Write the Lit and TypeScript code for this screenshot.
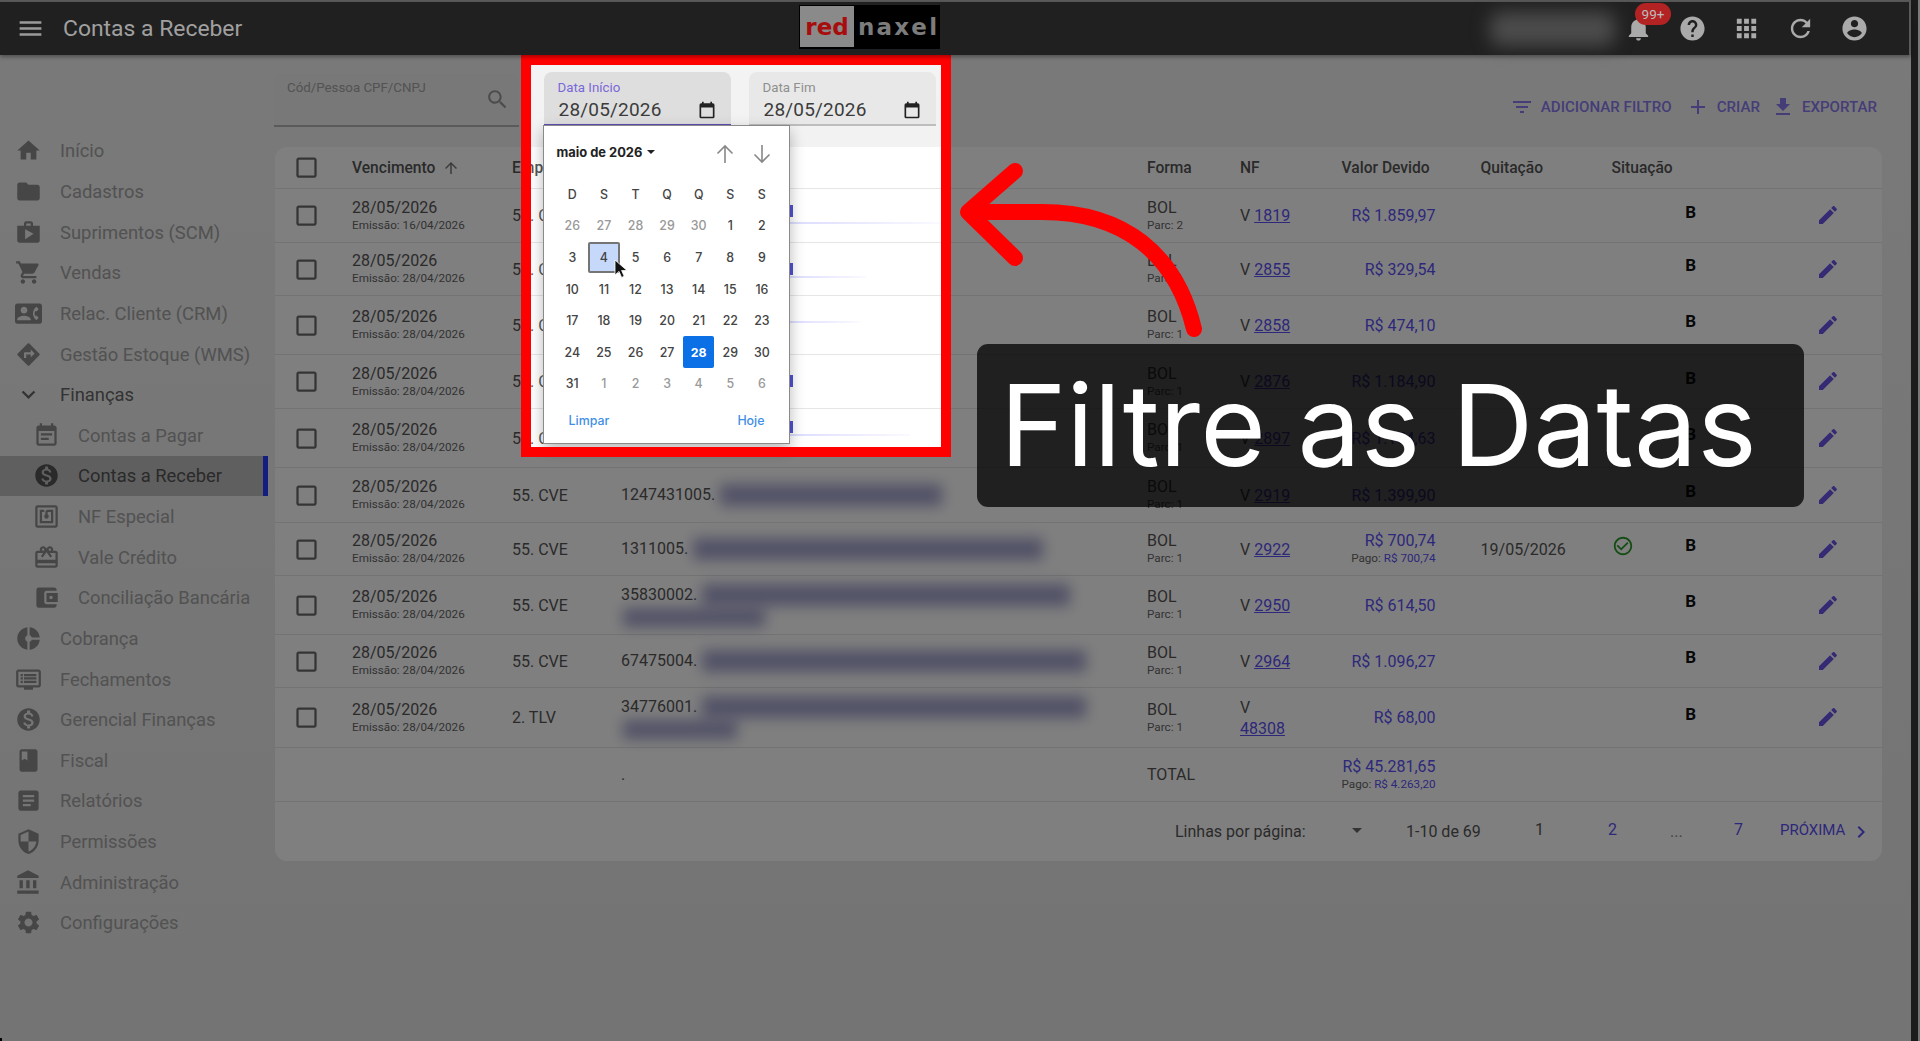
import { LitElement, html, css } from "lit";
import { customElement } from "lit/decorators.js";

const P: Record<string, string> = {
  menu: "M3 18h18v-2H3v2zm0-5h18v-2H3v2zm0-7v2h18V6H3z",
  bell: "M12 22c1.1 0 2-.9 2-2h-4c0 1.1.89 2 2 2zm6-6v-5c0-3.07-1.64-5.64-4.5-6.32V4c0-.83-.67-1.5-1.5-1.5s-1.5.67-1.5 1.5v.68C7.63 5.36 6 7.92 6 11v5l-2 2v1h16v-1l-2-2z",
  help: "M12 2C6.48 2 2 6.48 2 12s4.48 10 10 10 10-4.48 10-10S17.52 2 12 2zm1 17h-2v-2h2v2zm2.07-7.75l-.9.92C13.45 12.9 13 13.5 13 15h-2v-.5c0-1.1.45-2.1 1.17-2.83l1.24-1.26c.37-.36.59-.86.59-1.41 0-1.1-.9-2-2-2s-2 .9-2 2H8c0-2.21 1.79-4 4-4s4 1.79 4 4c0 .88-.36 1.68-.93 2.25z",
  apps: "M4 8h4V4H4v4zm6 12h4v-4h-4v4zm-6 0h4v-4H4v4zm0-6h4v-4H4v4zm6 0h4v-4h-4v4zm6-10v4h4V4h-4zm-6 4h4V4h-4v4zm6 6h4v-4h-4v4zm0 6h4v-4h-4v4z",
  refresh: "M17.65 6.35C16.2 4.9 14.21 4 12 4c-4.42 0-7.99 3.58-7.99 8s3.57 8 7.99 8c3.73 0 6.84-2.55 7.73-6h-2.08c-.82 2.33-3.04 4-5.65 4-3.31 0-6-2.69-6-6s2.69-6 6-6c1.66 0 3.14.69 4.22 1.78L13 11h7V4l-2.35 2.35z",
  user: "M12 2C6.48 2 2 6.48 2 12s4.48 10 10 10 10-4.48 10-10S17.52 2 12 2zm0 3c1.66 0 3 1.34 3 3s-1.34 3-3 3-3-1.34-3-3 1.34-3 3-3zm0 14.2c-2.5 0-4.71-1.28-6-3.22.03-1.99 4-3.08 6-3.08 1.99 0 5.97 1.09 6 3.08-1.29 1.94-3.5 3.22-6 3.22z",
  search: "M15.5 14h-.79l-.28-.27C15.41 12.59 16 11.11 16 9.5 16 5.91 13.09 3 9.5 3S3 5.91 3 9.5 5.91 16 9.5 16c1.61 0 3.09-.59 4.23-1.57l.27.28v.79l5 4.99L20.49 19l-4.99-5zm-6 0C7.01 14 5 11.99 5 9.5S7.01 5 9.5 5 14 7.01 14 9.5 11.99 14 9.5 14z",
  filter: "M10 18h4v-2h-4v2zM3 6v2h18V6H3zm3 7h12v-2H6v2z",
  add: "M19 13h-6v6h-2v-6H5v-2h6V5h2v6h6v2z",
  download: "M19 9h-4V3H9v6H5l7 7 7-7zM5 18v2h14v-2H5z",
  edit: "M3 17.25V21h3.75L17.81 9.94l-3.75-3.75L3 17.25zM20.71 7.04c.39-.39.39-1.02 0-1.41l-2.34-2.34c-.39-.39-1.02-.39-1.41 0l-1.83 1.83 3.75 3.75 1.83-1.83z",
  up: "M4 12l1.41 1.41L11 7.83V20h2V7.83l5.58 5.59L20 12l-8-8-8 8z",
  check: "M16.59 7.58L10 14.17l-3.59-3.58L5 12l5 5 8-8zM12 2C6.48 2 2 6.48 2 12s4.48 10 10 10 10-4.48 10-10S17.52 2 12 2zm0 18c-4.42 0-8-3.58-8-8s3.58-8 8-8 8 3.58 8 8-3.58 8-8 8z",
  chev: "M10 6L8.59 7.41 13.17 12l-4.58 4.59L10 18l6-6z",
  box: "M19 5v14H5V5h14m0-2H5c-1.1 0-2 .9-2 2v14c0 1.1.9 2 2 2h14c1.1 0 2-.9 2-2V5c0-1.1-.9-2-2-2z",
  cal: "M19 4h-1V2h-2v2H8V2H6v2H5a2 2 0 0 0-2 2v14a2 2 0 0 0 2 2h14a2 2 0 0 0 2-2V6a2 2 0 0 0-2-2zm0 16H5V9h14v11z",
  home: "M10 20v-6h4v6h5v-8h3L12 3 2 12h3v8z",
  folder: "M10 4H4c-1.1 0-1.99.9-1.99 2L2 18c0 1.1.9 2 2 2h16c1.1 0 2-.9 2-2V8c0-1.1-.9-2-2-2h-8l-2-2z",
  shop: "M16 6V4c0-1.11-.89-2-2-2h-4c-1.11 0-2 .89-2 2v2H2v13c0 1.11.89 2 2 2h16c1.11 0 2-.89 2-2V6h-6zm-6-2h4v2h-4V4zM9 18V9l7.5 4L9 18z",
  cart: "M7 18c-1.1 0-1.99.9-1.99 2S5.9 22 7 22s2-.9 2-2-.9-2-2-2zM1 2v2h2l3.6 7.59-1.35 2.45c-.16.28-.25.61-.25.96 0 1.1.9 2 2 2h12v-2H7.42c-.14 0-.25-.11-.25-.25l.03-.12.9-1.63h7.45c.75 0 1.41-.41 1.75-1.03l3.58-6.49c.08-.14.12-.31.12-.48 0-.55-.45-1-1-1H5.21l-.94-2H1zm16 16c-1.1 0-1.99.9-1.99 2s.89 2 1.99 2 2-.9 2-2-.9-2-2-2z",
  crm: "M22 3H2C.9 3 0 3.9 0 5v14c0 1.1.9 2 2 2h20c1.1 0 1.99-.9 1.99-2L24 5c0-1.1-.9-2-2-2zM8 6c1.66 0 3 1.34 3 3s-1.34 3-3 3-3-1.34-3-3 1.34-3 3-3zm6 12H2v-1c0-2 4-3.1 6-3.1s6 1.1 6 3.1v1zm3.85-4h1.64L21 16l-1.99 1.99c-1.31-.98-2.28-2.38-2.73-3.99-.18-.64-.28-1.31-.28-2s.1-1.36.28-2c.45-1.62 1.42-3.01 2.73-3.99L21 8l-1.51 2h-1.64c-.22.63-.35 1.3-.35 2s.13 1.37.35 2z",
  wms: "M21.71 11.29l-9-9c-.39-.39-1.02-.39-1.41 0l-9 9c-.39.39-.39 1.02 0 1.41l9 9c.39.39 1.02.39 1.41 0l9-9c.39-.38.39-1.01 0-1.41zM14 14.5V12h-4v3H8v-4c0-.55.45-1 1-1h5V7.5l3.5 3.5-3.5 3.5z",
  more: "M16.59 8.59L12 13.17 7.41 8.59 6 10l6 6 6-6z",
  note: "M17 10H7v2h10v-2zm2-7h-1V1h-2v2H8V1H6v2H5c-1.11 0-1.99.9-1.99 2L3 19c0 1.1.89 2 2 2h14c1.1 0 2-.9 2-2V5c0-1.1-.9-2-2-2zm0 16H5V8h14v11zm-5-5H7v2h7v-2z",
  money: "M12 2C6.48 2 2 6.48 2 12s4.48 10 10 10 10-4.48 10-10S17.52 2 12 2zm1.41 16.09V20h-2.67v-1.93c-1.71-.36-3.16-1.46-3.27-3.4h1.96c.1 1.05.82 1.87 2.65 1.87 1.96 0 2.4-.98 2.4-1.59 0-.83-.44-1.61-2.67-2.14-2.48-.6-4.18-1.62-4.18-3.67 0-1.72 1.39-2.84 3.11-3.21V4h2.67v1.95c1.86.45 2.79 1.86 2.85 3.39H14.3c-.05-1.11-.64-1.87-2.22-1.87-1.5 0-2.4.68-2.4 1.64 0 .84.65 1.39 2.67 1.91s4.18 1.39 4.18 3.91c-.01 1.83-1.38 2.83-3.12 3.16z",
  nf: "M20 2H4c-1.1 0-2 .9-2 2v16c0 1.1.9 2 2 2h16c1.1 0 2-.9 2-2V4c0-1.1-.9-2-2-2zm0 18H4V4h16v16zM18 6h-5c-1.1 0-2 .9-2 2v2.28c-.6.35-1 .98-1 1.72 0 1.1.9 2 2 2s2-.9 2-2c0-.74-.4-1.38-1-1.72V8h3v8H8V8h2V6H6v12h12V6z",
  gift: "M20 6h-2.18c.11-.31.18-.65.18-1 0-1.66-1.34-3-3-3-1.05 0-1.96.54-2.5 1.35l-.5.67-.5-.68C10.96 2.54 10.05 2 9 2 7.34 2 6 3.34 6 5c0 .35.07.69.18 1H4c-1.11 0-1.99.89-1.99 2L2 19c0 1.11.89 2 2 2h16c1.11 0 2-.89 2-2V8c0-1.11-.89-2-2-2zm-5-2c.55 0 1 .45 1 1s-.45 1-1 1-1-.45-1-1 .45-1 1-1zM9 4c.55 0 1 .45 1 1s-.45 1-1 1-1-.45-1-1 .45-1 1-1zm11 15H4v-2h16v2zm0-5H4V8h5.08L7 10.83 8.62 12 11 8.76l1-1.36 1 1.36L15.38 12 17 10.83 14.92 8H20v6z",
  wallet: "M21 18v1c0 1.1-.9 2-2 2H5c-1.11 0-2-.9-2-2V5c0-1.1.89-2 2-2h14c1.1 0 2 .9 2 2v1h-9c-1.11 0-2 .9-2 2v8c0 1.1.89 2 2 2h9zm-9-2h10V8H12v8zm4-2.5c-.83 0-1.5-.67-1.5-1.5s.67-1.5 1.5-1.5 1.5.67 1.5 1.5-.67 1.5-1.5 1.5z",
  donut: "M11 9.16V2c-5 .5-9 4.79-9 10s4 9.5 9 10v-7.16c-1-.41-2-1.52-2-2.84s1-2.43 2-2.84zM14.86 11H22c-.48-4.75-4-8.53-9-9v7.16c1 .3 1.52.98 1.86 1.84zM13 14.84V22c5-.47 8.52-4.25 9-9h-7.14c-.34.86-.86 1.54-1.86 1.84z",
  screen: "M21 3H3c-1.1 0-2 .9-2 2v12c0 1.1.9 2 2 2h5v2h8v-2h5c1.1 0 2-.9 2-2V5c0-1.1-.9-2-2-2zm0 14H3V5h18v12zM5 7h2v2H5V7zm0 3h2v2H5v-2zm0 3h2v2H5v-2zm3-6h11v2H8V7zm0 3h11v2H8v-2zm0 3h11v2H8v-2z",
  book: "M18 2H6c-1.1 0-2 .9-2 2v16c0 1.1.9 2 2 2h12c1.1 0 2-.9 2-2V4c0-1.1-.9-2-2-2zM6 4h5v8l-2.5-1.5L6 12V4z",
  article: "M19 3H5c-1.1 0-2 .9-2 2v14c0 1.1.9 2 2 2h14c1.1 0 2-.9 2-2V5c0-1.1-.9-2-2-2zm-5 14H7v-2h7v2zm3-4H7v-2h10v2zm0-4H7V7h10v2z",
  shield: "M12 1L3 5v6c0 5.55 3.84 10.74 9 12 5.16-1.26 9-6.45 9-12V5l-9-4zm0 10.99h7c-.53 4.12-3.28 7.79-7 8.94V12H5V6.3l7-3.11v8.8z",
  bank: "M4 10v7h3v-7H4zm6 0v7h3v-7h-3zM2 22h19v-3H2v3zm14-12v7h3v-7h-3zm-4.5-9L2 6v2h19V6l-9.5-5z",
  gear: "M19.14 12.94c.04-.3.06-.61.06-.94 0-.32-.02-.64-.07-.94l2.03-1.58c.18-.14.23-.41.12-.61l-1.92-3.32c-.12-.22-.37-.29-.59-.22l-2.39.96c-.5-.38-1.03-.7-1.62-.94l-.36-2.54c-.04-.24-.24-.41-.48-.41h-3.84c-.24 0-.43.17-.47.41l-.36 2.54c-.59.24-1.13.57-1.62.94l-2.39-.96c-.22-.08-.47 0-.59.22L2.74 8.87c-.12.21-.08.47.12.61l2.03 1.58c-.05.3-.09.63-.09.94s.02.64.07.94l-2.03 1.58c-.18.14-.23.41-.12.61l1.92 3.32c.12.22.37.29.59.22l2.39-.96c.5.38 1.03.7 1.62.94l.36 2.54c.05.24.24.41.48.41h3.84c.24 0 .44-.17.47-.41l.36-2.54c.59-.24 1.13-.56 1.62-.94l2.39.96c.22.08.47 0 .59-.22l1.92-3.32c.12-.22.07-.47-.12-.61l-2.01-1.58zM12 15.6c-1.98 0-3.6-1.62-3.6-3.6s1.62-3.6 3.6-3.6 3.6 1.62 3.6 3.6-1.62 3.6-3.6 3.6z",
};

const icon = (n: string, cls = "") =>
  html`<svg class=${"ic " + cls} viewBox="0 0 24 24" fill="currentColor"><path d=${P[n]}></path></svg>`;

type Nav = { i: string; t: string; sub?: boolean; on?: boolean; strong?: boolean };
const NAV: Nav[] = [
  { i: "home", t: "Início" }, { i: "folder", t: "Cadastros" }, { i: "shop", t: "Suprimentos (SCM)" },
  { i: "cart", t: "Vendas" }, { i: "crm", t: "Relac. Cliente (CRM)" }, { i: "wms", t: "Gestão Estoque (WMS)" },
  { i: "more", t: "Finanças", strong: true }, { i: "note", t: "Contas a Pagar", sub: true },
  { i: "money", t: "Contas a Receber", sub: true, on: true }, { i: "nf", t: "NF Especial", sub: true },
  { i: "gift", t: "Vale Crédito", sub: true }, { i: "wallet", t: "Conciliação Bancária", sub: true },
  { i: "donut", t: "Cobrança" }, { i: "screen", t: "Fechamentos" }, { i: "money", t: "Gerencial Finanças" },
  { i: "book", t: "Fiscal" }, { i: "article", t: "Relatórios" }, { i: "shield", t: "Permissões" },
  { i: "bank", t: "Administração" }, { i: "gear", t: "Configurações" },
];

type Row = {
  h: number; em: string; emp: string; id?: string; blobs?: number[]; parc: string; nf: string; val: string;
  pago?: string; quit?: string; ok?: boolean; wrap?: boolean; fragY?: number; line?: number; lineY?: number;
};
const ROWS: Row[] = [
  { h: 54, em: "16/04/2026", emp: "55. CVE", parc: "2", nf: "1819", val: "R$ 1.859,97", fragY: 16, line: 151, lineY: 33 },
  { h: 53, em: "28/04/2026", emp: "55. CVE", parc: "1", nf: "2855", val: "R$ 329,54", fragY: 20, line: 76, lineY: 33 },
  { h: 59.3, em: "28/04/2026", emp: "55. CVE", parc: "1", nf: "2858", val: "R$ 474,10", line: 70, lineY: 25 },
  { h: 53.7, em: "28/04/2026", emp: "55. CVE", parc: "1", nf: "2876", val: "R$ 1.184,90", fragY: 20 },
  { h: 59.3, em: "28/04/2026", emp: "55. CVE", parc: "1", nf: "2897", val: "R$ 1.154,63", fragY: 12, line: 120, lineY: 25 },
  { h: 54.7, em: "28/04/2026", emp: "55. CVE", id: "1247431005.", blobs: [222], parc: "1", nf: "2919", val: "R$ 1.399,90" },
  { h: 53.3, em: "28/04/2026", emp: "55. CVE", id: "1311005.", blobs: [350], parc: "1", nf: "2922", val: "R$ 700,74", pago: "R$ 700,74", quit: "19/05/2026", ok: true },
  { h: 59, em: "28/04/2026", emp: "55. CVE", id: "35830002.", blobs: [368, 142], parc: "1", nf: "2950", val: "R$ 614,50" },
  { h: 53, em: "28/04/2026", emp: "55. CVE", id: "67475004.", blobs: [384], parc: "1", nf: "2964", val: "R$ 1.096,27" },
  { h: 59.7, em: "28/04/2026", emp: "2. TLV", id: "34776001.", blobs: [384, 114], parc: "1", nf: "48308", val: "R$ 68,00", wrap: true },
];

const HEADS = ["D", "S", "T", "Q", "Q", "S", "S"];
const DAYS = [26, 27, 28, 29, 30, 1, 2, 3, 4, 5, 6, 7, 8, 9, 10, 11, 12, 13, 14, 15, 16, 17, 18, 19, 20, 21, 22, 23, 24, 25, 26, 27, 28, 29, 30, 31, 1, 2, 3, 4, 5, 6];

@customElement("app-root")
export class AppRoot extends LitElement {
  static styles = css`
    :host { display: block; width: 1920px; height: 1041px; overflow: hidden; position: relative; font-family: Roboto, sans-serif; background: #eee; }
    * { box-sizing: border-box; }
    .ic { display: block; flex: none; width: 24px; height: 24px; }
    .page { display: flex; height: 1041px; background: linear-gradient(180deg, #f4f4f4, #e8e8e8); }
    .shell { width: 1911px; flex: none; display: flex; flex-direction: column; }
    .edge { width: 7px; flex: none; background: #383838; }
    .topline { height: 2px; width: 1911px; background: #5a5a5a; position: relative; z-index: 5; }
    .bar { height: 53px; width: 1911px; background: #202020; border-right: 2px solid #5a5a5a; color: #a8a8a8; display: flex; align-items: center; position: relative; z-index: 5; box-shadow: 0 2px 4px rgba(0,0,0,.35); }
    .burger { width: 29px; height: 29px; margin-left: 16px; color: #9a9a9a; }
    .title { font-size: 22.9px; margin-left: 18px; color: #a0a0a0; width: 736px; }
    .logo { width: 141px; height: 44px; background: #000; display: flex; align-items: center; padding-left: 1px; gap: 4px; font-family: "DejaVu Sans", sans-serif; font-weight: 700; font-size: 23px; margin-top: -4px; }
    .logo .r { width: 54px; height: 41px; background: #8a8a8a; color: #a80d0d; display: flex; align-items: center; justify-content: center; }
    .logo .n { color: #7c7c7c; letter-spacing: 2.2px; }
    .smear { width: 125px; height: 34px; margin-left: 550px; background: #4c4c4c; filter: blur(9px); border-radius: 10px; }
    .bar-ic { display: flex; align-items: center; margin-left: auto; margin-right: 40px; gap: 25px; }
    .bar-ic .ic { width: 29px; height: 29px; color: #aaa; }
    .bell { position: relative; width: 29px; height: 29px; }
    .badge { position: absolute; left: 11px; top: -11px; width: 36px; height: 22px; border-radius: 11px; background: #b42323; color: #bdbdbd; font-size: 13.5px; line-height: 22px; text-align: center; }
    .body { flex: 1; display: flex; min-height: 0; }
    .side { width: 275px; flex: none; padding-top: 75.6px; }
    .nav { height: 40.63px; display: flex; align-items: center; padding-left: 15px; gap: 18px; color: #a4a4a4; font-size: 18.4px; position: relative; }
    .nav .ic { width: 27px; height: 27px; color: #8c8c8c; }
    .nav.sub { padding-left: 33px; }
    .nav.strong { color: #666; }
    .nav.strong .ic { color: #666; }
    .nav.on { width: 268px; background: #bfbfbf; color: #545454; border-right: 5px solid #283cff; }
    .nav.on .ic { color: #545454; }
    .main { flex: 1; min-width: 0; }
    .tools { height: 92px; display: flex; padding-top: 18px; align-items: flex-start; }
    .field { background: #f0f0f0; border-bottom: 2px solid #b4b4b4; border-radius: 8px 8px 0 0; height: 54px; position: relative; }
    .f1 { width: 245px; margin-left: -1px; padding: 7px 9px 0 13px; font-size: 13.3px; color: #a6a6a6; display: flex; justify-content: space-between; }
    .f1 .ic { color: #999; width: 25px; height: 25px; margin: 7px 0 0 0; }
    .date { width: 187px; padding: 8px 0 0 14px; margin-top: -1px; background: #e8e8e8; color: #333; }
    .date.a { margin-left: 24.5px; background: #dedede; border-bottom-color: #5c4fb5; }
    .date.b { margin-left: 18px; border-bottom-color: #bdbdbd; }
    .date label { display: block; font-size: 13.3px; line-height: 15px; color: #8f8f8f; }
    .date.a label { color: #7a68d8; }
    .date .v { display: flex; align-items: center; justify-content: space-between; font-size: 19px; line-height: 25px; letter-spacing: .2px; padding: 2px 14px 0 1px; color: #3c3c3c; }
    .date .ic { width: 20px; height: 20px; color: #222; }
    .acts { margin-left: auto; margin-right: 34px; display: flex; align-items: center; gap: 14px; height: 34px; margin-top: 17px; font-size: 15.1px; font-weight: 500; color: #8a7bf0; }
    .act { display: flex; align-items: center; gap: 7px; }
    .act:last-child { margin-left: -3px; }
    .act .ic { width: 24px; height: 24px; }
    .card { width: 1607px; background: #fff; border-radius: 12px; height: 714px; }
    .row { display: grid; grid-template-columns: 77px 160px 109px 526px 93px 90.6px 105px 45px 131px 62px 34px 1fr; align-items: center; border-bottom: 1px solid #e6e6e6; font-size: 16px; color: #555; position: relative; }
    .head { height: 42px; font-weight: 500; font-size: 15.6px; color: #555; }
    .cbx { width: 27px; height: 27px; margin-left: 17.5px; color: #6a6a6a; }
    .vh { display: flex; align-items: center; gap: 7px; }
    .vh .ic { width: 18px; height: 18px; color: #777; }
    .vd { white-space: nowrap; margin-left: 11px; }
    .two { display: flex; flex-direction: column; line-height: 19px; }
    .small { font-size: 11.7px; line-height: 17px; color: #666; }
    .blue { color: #5b50f5; }
    .num { text-align: right; justify-self: end; }
    .cust { display: flex; flex-wrap: wrap; align-items: center; line-height: 20px; }
    .blob { height: 22px; background: #5a5aa8; filter: blur(7px); margin-left: 5px; opacity: .55; }
    .blob.l2 { margin-left: 2px; margin-top: 2px; height: 19px; }
    .break { flex-basis: 100%; height: 0; }
    .frag { position: absolute; left: 515px; width: 3px; height: 12px; background: #5252d0; filter: blur(.6px); }
    .line { position: absolute; left: 515px; height: 2px; background: linear-gradient(90deg, #dcdcff, rgba(220,220,255,.15)); }
    a { color: #5b50f5; text-decoration: underline; }
    .nfw { line-height: 21px; }
    .bb { font-weight: 700; font-size: 17px; color: #111; margin-top: -8px; text-align: center; }
    .pen { width: 24px; height: 24px; color: #6a56e8; margin: -1px 0 0 108px; }
    .okc { width: 22px; height: 22px; color: #2c9a2c; margin: -6px 0 0 0; }
    .total { height: 54.3px; }
    .pag { height: 58px; position: relative; font-size: 16px; color: #555; }
    .pag > * { position: absolute; line-height: 20px; white-space: nowrap; }
    .pl { left: 900px; top: 20px; }
    .tri2 { left: 1077px; top: 26px; width: 0; height: 0; border-left: 5px solid transparent; border-right: 5px solid transparent; border-top: 5px solid #666; }
    .pr { left: 1131px; top: 20px; }
    .p1 { left: 1260px; top: 18px; }
    .p2 { left: 1333px; top: 18px; }
    .pd { left: 1395px; top: 20px; color: #888; }
    .p7 { left: 1459px; top: 18px; }
    .pn { left: 1505px; top: 18px; font-size: 15px; font-weight: 400; }
    .pc { left: 1574px; top: 18px; }
    .popup { position: absolute; left: -1px; top: 53px; width: 247px; height: 319px; background: #fff; border: 1px solid #8a8a8a; box-shadow: 0 6px 14px rgba(0,0,0,.28); font-family: Inter, sans-serif; z-index: 2; color: #333; padding: 0 0 0 13px; }
    .ph { display: flex; align-items: center; height: 52px; font-size: 12.9px; font-weight: 700; color: #222; }
    .tri { width: 0; height: 0; border-left: 4px solid transparent; border-right: 4px solid transparent; border-top: 4px solid #222; margin-left: 5px; }
    .arrows { margin-left: 58px; display: flex; gap: 13px; padding-top: 3px; }
    .arrows svg { width: 24px; height: 24px; color: #888; }
    .cal { display: grid; grid-template-columns: repeat(7, 31.6px); grid-auto-rows: 31.6px; font-size: 12.4px; font-weight: 500; text-align: center; margin-top: .5px; }
    .cal > div { display: flex; align-items: center; justify-content: center; color: #444; }
    .cal .o { color: #999; }
    .cal .hov { background: #c6d9fb; border: 2px solid #757575; border-radius: 2px; }
    .cal .sel { background: #0b6fe6; color: #fff; border-radius: 2px; font-weight: 700; }
    .pf { display: flex; justify-content: space-between; padding: 13px 24px 0 12px; font-size: 12.4px; font-weight: 500; color: #3f8fe6; }
    .cursor { position: absolute; left: 70px; top: 133px; width: 15px; height: 20px; }
    .frame { position: absolute; left: 521px; top: 55px; width: 430px; height: 402px; border: 10px solid #f00; box-shadow: 0 0 0 2500px rgba(0,0,0,.5); z-index: 3; pointer-events: none; }
    .caption { position: absolute; left: 977px; top: 344px; width: 827px; height: 163px; border-radius: 11px; background: rgba(0,0,0,.75); color: #fff; font-family: Inter, sans-serif; font-size: 112.7px; line-height: 163px; padding-left: 23px; z-index: 6; white-space: nowrap; }
    .arrow { position: absolute; left: 952px; top: 150px; width: 260px; height: 200px; z-index: 6; }
    .dot { position: absolute; left: 0; bottom: 0; width: 2px; height: 3px; background: #000; z-index: 7; }
  `;

  render() {
    return html`
      <div class="page">
        <div class="shell">
          <div class="topline"></div>
          <header class="bar">
            ${icon("menu", "burger")}
            <div class="title">Contas a Receber</div>
            <div class="logo"><div class="r">red</div><div class="n">naxel</div></div>
            <div class="smear"></div>
            <div class="bar-ic">
              <div class="bell">${icon("bell")}<div class="badge">99+</div></div>
              ${icon("help")} ${icon("apps")} ${icon("refresh")} ${icon("user")}
            </div>
          </header>
          <div class="body">
            <nav class="side">
              ${NAV.map((n) => html`<div class="nav ${n.sub ? "sub" : ""} ${n.on ? "on" : ""} ${n.strong ? "strong" : ""}">${icon(n.i)}<span>${n.t}</span></div>`)}
            </nav>
            <main class="main">
              <div class="tools">
                <div class="field f1"><span>Cód/Pessoa CPF/CNPJ</span>${icon("search")}</div>
                <div class="field date a">
                  <label>Data Início</label>
                  <div class="v"><span>28/05/2026</span>${icon("cal")}</div>
                  ${this.popup()}
                </div>
                <div class="field date b">
                  <label>Data Fim</label>
                  <div class="v"><span>28/05/2026</span>${icon("cal")}</div>
                </div>
                <div class="acts">
                  <div class="act">${icon("filter")}ADICIONAR FILTRO</div>
                  <div class="act">${icon("add")}CRIAR</div>
                  <div class="act">${icon("download")}EXPORTAR</div>
                </div>
              </div>
              <section class="card">
                <div class="row head">
                  ${icon("box", "cbx")}
                  <div class="vh">Vencimento ${icon("up")}</div>
                  <div>Empresa</div><div></div><div>Forma</div><div>NF</div>
                  <div class="vd">Valor Devido</div><div></div><div>Quitação</div><div>Situação</div>
                </div>
                ${ROWS.map((r) => this.row(r))}
                <div class="row total">
                  <div></div><div></div><div></div><div>.</div><div>TOTAL</div><div></div>
                  <div class="two num"><span class="blue">R$ 45.281,65</span><span class="small">Pago: <span class="blue">R$ 4.263,20</span></span></div>
                </div>
                <div class="pag">
                  <span class="pl">Linhas por página:</span>
                  <span class="tri2"></span>
                  <span class="pr">1-10 de 69</span>
                  <span class="p1">1</span>
                  <span class="p2 blue">2</span>
                  <span class="pd">...</span>
                  <span class="p7 blue">7</span>
                  <span class="pn blue">PRÓXIMA</span>
                  <span class="pc blue">${icon("chev")}</span>
                </div>
              </section>
            </main>
          </div>
        </div>
        <div class="edge"></div>
      </div>
      <div class="frame"></div>
      <svg class="arrow" viewBox="0 0 260 200" fill="none" stroke="#f00" stroke-width="16" stroke-linecap="round" stroke-linejoin="round">
        <path d="M242 179 C224 104 172 62 90 62 L18 62"></path>
        <path d="M63 21 L16 62 L63 108"></path>
      </svg>
      <div class="caption">Filtre as Datas</div>
      <div class="dot"></div>
    `;
  }

  popup() {
    return html`<div class="popup">
      <div class="ph"><span>maio de 2026</span><div class="tri"></div>
        <div class="arrows">
          <svg viewBox="0 0 24 24" fill="none" stroke="currentColor" stroke-width="1.6"><path d="M12 21V4M4.5 11.5 12 4l7.5 7.5"></path></svg>
          <svg viewBox="0 0 24 24" fill="none" stroke="currentColor" stroke-width="1.6"><path d="M12 3v17M4.5 12.5 12 20l7.5-7.5"></path></svg>
        </div>
      </div>
      <div class="cal">
        ${HEADS.map((h) => html`<div>${h}</div>`)}
        ${DAYS.map((d, i) => {
          const o = i < 5 || i > 35;
          const cls = i === 8 ? "hov" : i === 32 ? "sel" : o ? "o" : "";
          return html`<div class=${cls}>${d}</div>`;
        })}
      </div>
      <div class="pf"><span>Limpar</span><span>Hoje</span></div>
      <svg class="cursor" viewBox="0 0 15 20"><path d="M1 1v15l4-3.6 2.6 6 2.6-1.1-2.6-5.8H13z" fill="#111" stroke="#fff" stroke-width=".8"></path></svg>
    </div>`;
  }

  row(r: Row) {
    return html`<div class="row" style="height:${r.h}px">
      ${icon("box", "cbx")}
      <div class="two"><span>28/05/2026</span><span class="small">Emissão: ${r.em}</span></div>
      <div>${r.emp}</div>
      <div class="cust">
        ${r.id ? html`<span>${r.id}</span>` : ""}
        ${r.blobs?.map((b, i) => html`${i === 1 ? html`<div class="break"></div>` : ""}<div class="blob ${i === 1 ? "l2" : ""}" style="width:${b}px"></div>`)}
      </div>
      <div class="two"><span>BOL</span><span class="small">Parc: ${r.parc}</span></div>
      <div class="nfw">${r.wrap ? html`V<br /><a>${r.nf}</a>` : html`V <a>${r.nf}</a>`}</div>
      <div class="two num"><span class="blue">${r.val}</span>${r.pago ? html`<span class="small">Pago: <span class="blue">${r.pago}</span></span>` : ""}</div>
      <div></div>
      <div>${r.quit ?? ""}</div>
      <div>${r.ok ? icon("check", "okc") : ""}</div>
      <div class="bb">B</div>
      ${icon("edit", "pen")}
      ${r.fragY ? html`<span class="frag" style="top:${r.fragY}px"></span>` : ""}
      ${r.line ? html`<div class="line" style="top:${r.lineY}px;width:${r.line}px"></div>` : ""}
    </div>`;
  }
}
